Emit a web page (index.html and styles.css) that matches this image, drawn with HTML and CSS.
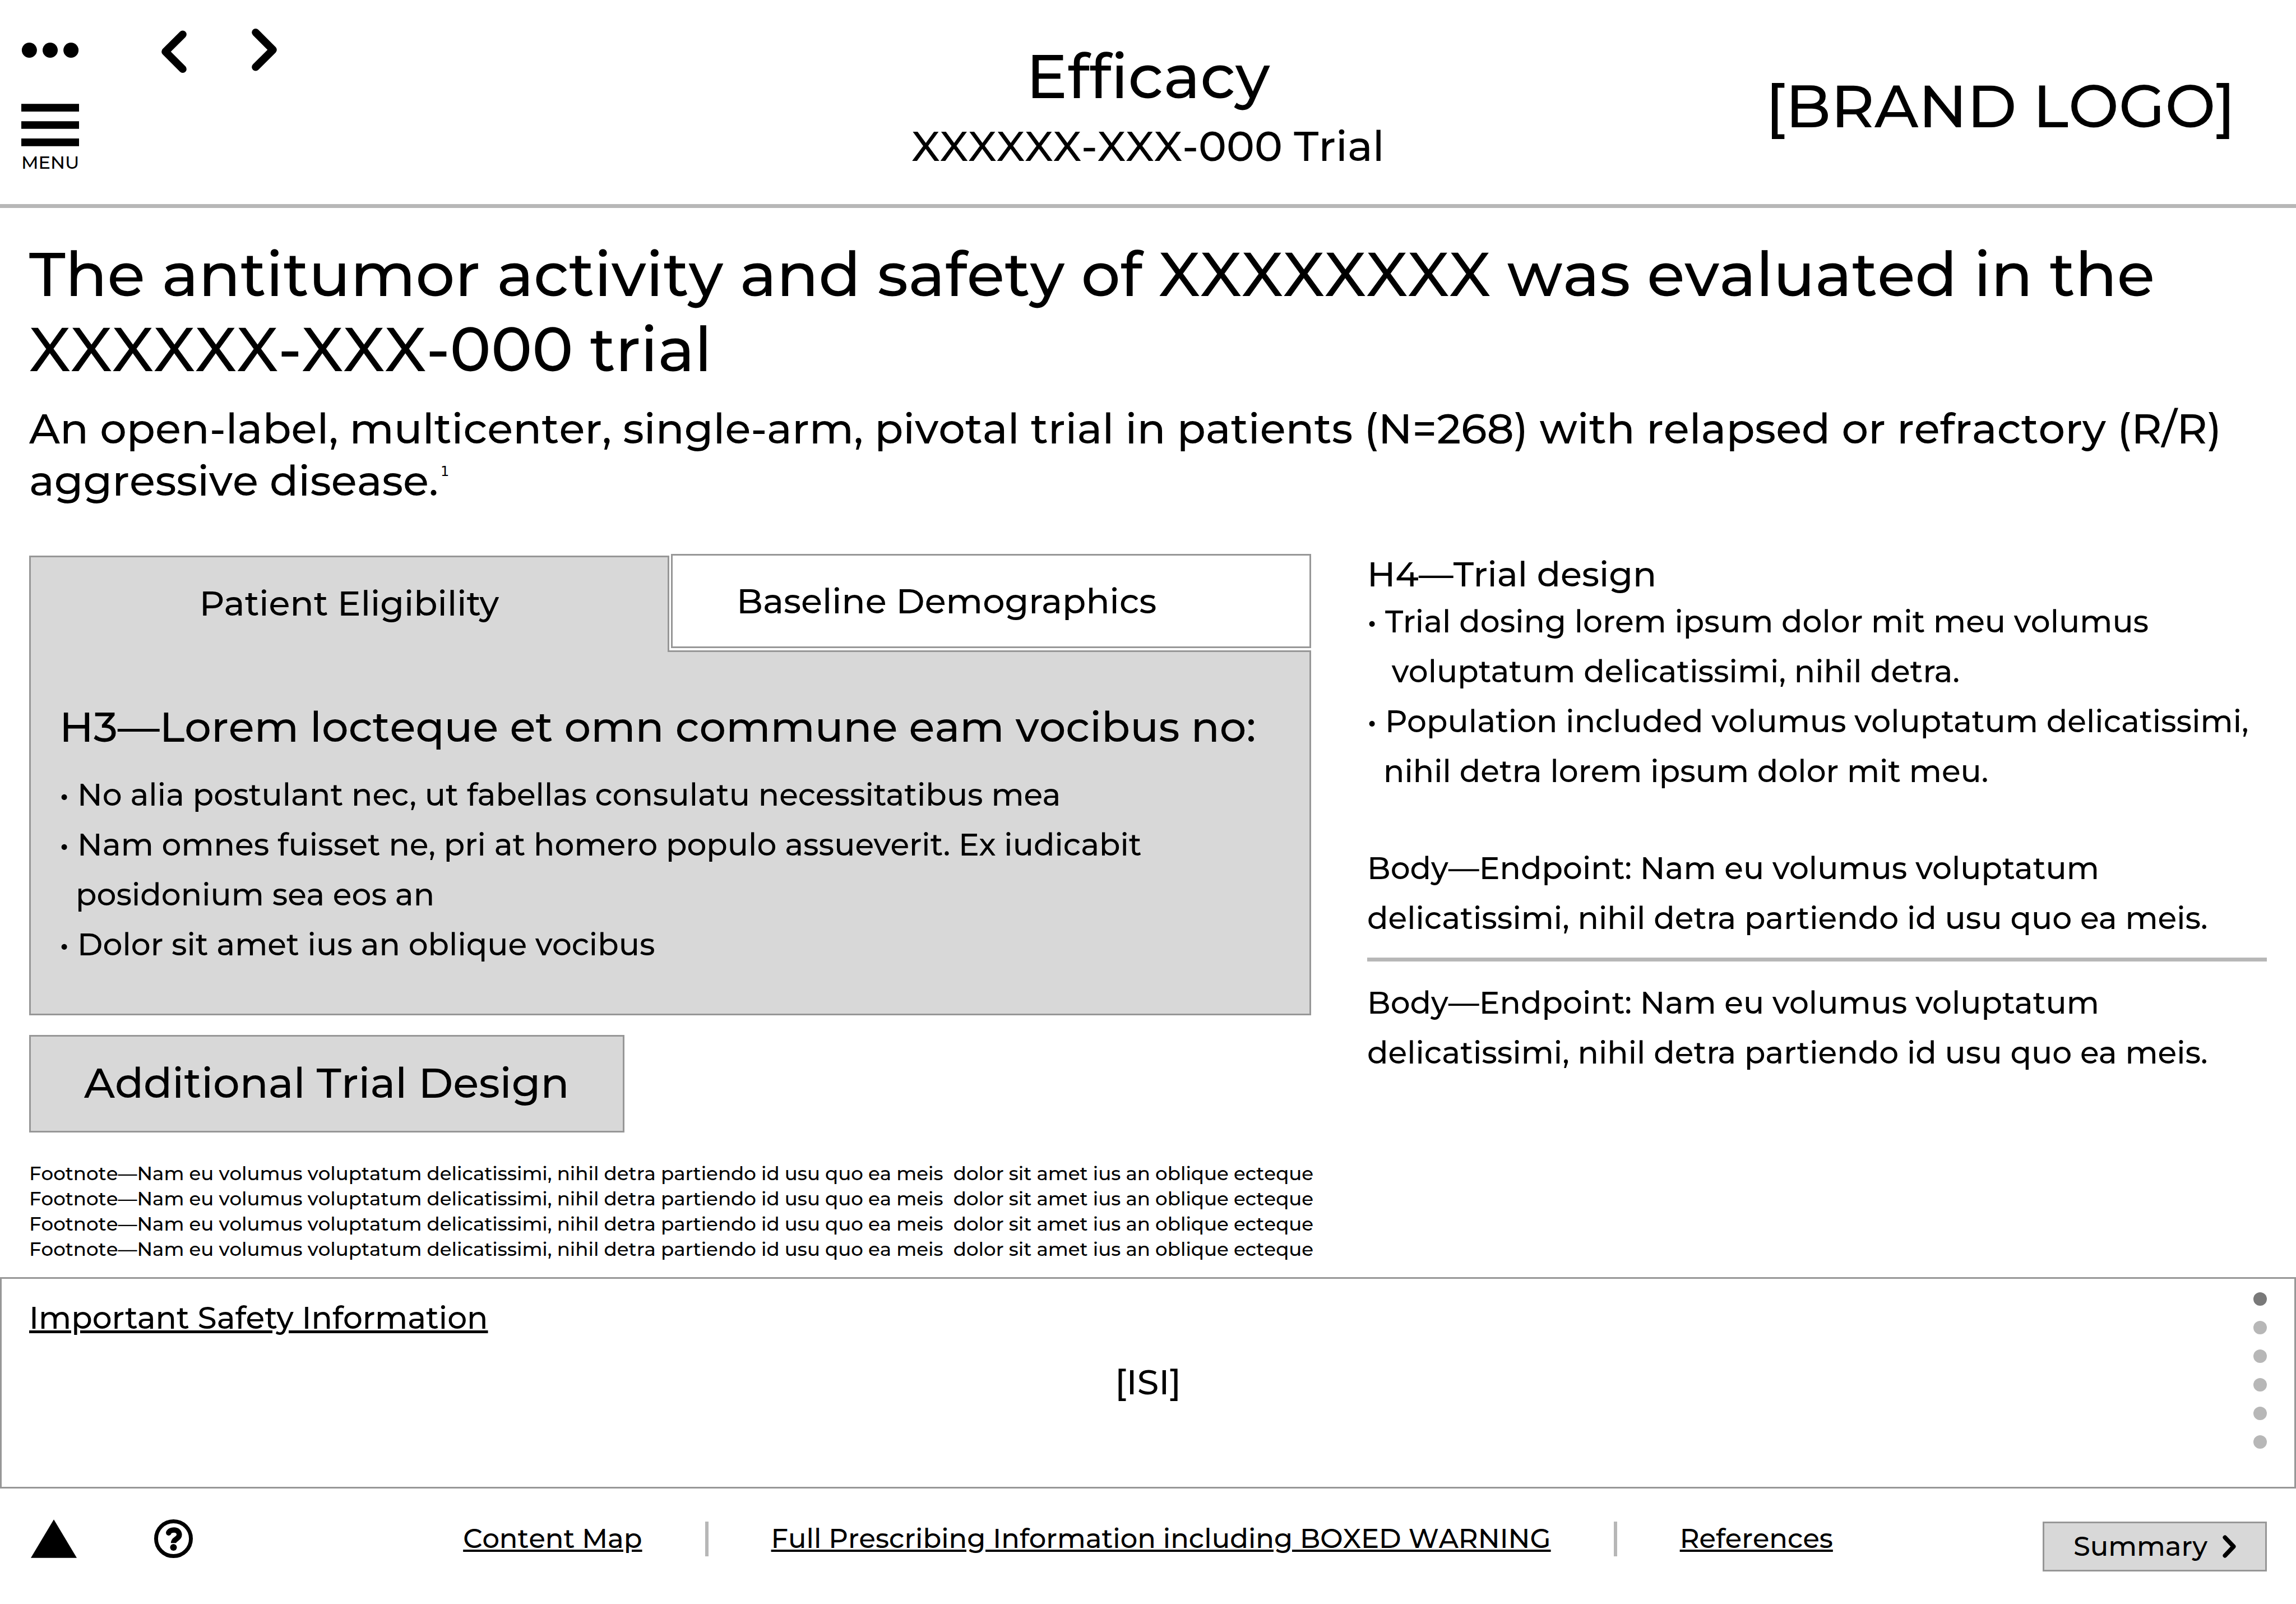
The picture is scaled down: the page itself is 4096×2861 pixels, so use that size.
FILE: index.html
```
<!DOCTYPE html>
<html lang="en">
<head>
<meta charset="utf-8">
<title>Efficacy</title>
<link rel="stylesheet" href="styles.css">
</head>
<body>
<div class="page">
  <header class="header">
    <div class="controls">
      <div class="menus">
        <button class="icon-button" type="button" aria-label="More">
          <svg class="dots-icon" viewBox="0 0 120 32"><circle cx="16" cy="16" r="16"/><circle cx="60" cy="16" r="16"/><circle cx="104" cy="16" r="16"/></svg>
        </button>
        <button class="icon-button menu-button" type="button">
          <svg class="bars-icon" viewBox="0 0 120 88"><path d="M0 0h120v16H0zM0 36h120v16H0zM0 72h120v16H0z"/></svg>
          <span>MENU</span>
        </button>
      </div>
      <div class="arrows">
        <button class="icon-button" type="button" aria-label="Previous">
          <svg class="arrow-icon" viewBox="0 0 52 92"><path d="M44 12L8 48L44 84"/></svg>
        </button>
        <button class="icon-button" type="button" aria-label="Next">
          <svg class="arrow-icon" viewBox="0 0 52 92"><path d="M8 8L44 44L8 80"/></svg>
        </button>
      </div>
    </div>
    <div class="titles">
      <p class="title">Efficacy</p>
      <p class="subtitle">XXXXXX-XXX-000 Trial</p>
    </div>
    <div class="logo">[BRAND LOGO]</div>
  </header>

  <main class="main">
    <h1 class="headline">The antitumor activity and safety of XXXXXXXX was evaluated in the XXXXXX-XXX-000 trial</h1>
    <p class="lead">An open-label, multicenter, single-arm, pivotal trial in patients (N=268) with relapsed or refractory (R/R) aggressive disease.<sup>1</sup></p>

    <div class="columns">
      <div class="study">
        <div class="tabs" role="tablist">
          <button class="tab tab-active" type="button" role="tab" aria-selected="true" aria-controls="eligibility">Patient Eligibility</button>
          <button class="tab tab-idle" type="button" role="tab" aria-selected="false">Baseline Demographics</button>
        </div>
        <section class="panel" id="eligibility" role="tabpanel">
          <h3 class="panel-title">H3—Lorem locteque et omn commune eam vocibus no:</h3>
          <ul class="bullets">
            <li>No alia postulant nec, ut fabellas consulatu necessitatibus mea</li>
            <li>Nam omnes fuisset ne, pri at homero populo assueverit. Ex iudicabit<br>posidonium sea eos an</li>
            <li>Dolor sit amet ius an oblique vocibus</li>
          </ul>
        </section>
        <button class="design-button" type="button">Additional Trial Design</button>
        <div class="footnotes">
          <p>Footnote—Nam eu volumus voluptatum delicatissimi, nihil detra partiendo id usu quo ea meis&nbsp; dolor sit amet ius an oblique ecteque</p>
          <p>Footnote—Nam eu volumus voluptatum delicatissimi, nihil detra partiendo id usu quo ea meis&nbsp; dolor sit amet ius an oblique ecteque</p>
          <p>Footnote—Nam eu volumus voluptatum delicatissimi, nihil detra partiendo id usu quo ea meis&nbsp; dolor sit amet ius an oblique ecteque</p>
          <p>Footnote—Nam eu volumus voluptatum delicatissimi, nihil detra partiendo id usu quo ea meis&nbsp; dolor sit amet ius an oblique ecteque</p>
        </div>
      </div>

      <aside class="design">
        <h4 class="design-title">H4—Trial design</h4>
        <ul class="bullets">
          <li>Trial dosing lorem ipsum dolor mit meu volumus<br>&nbsp;voluptatum delicatissimi, nihil detra.</li>
          <li>Population included volumus voluptatum delicatissimi,<br>nihil detra lorem ipsum dolor mit meu.</li>
        </ul>
        <p class="endpoint">Body—Endpoint: Nam eu volumus voluptatum<br>delicatissimi, nihil detra partiendo id usu quo ea meis.</p>
        <hr class="rule">
        <p>Body—Endpoint: Nam eu volumus voluptatum<br>delicatissimi, nihil detra partiendo id usu quo ea meis.</p>
      </aside>
    </div>
  </main>

  <section class="safety">
    <a class="safety-link" href="#safety">Important Safety Information</a>
    <p class="safety-text" id="safety">[ISI]</p>
    <div class="pager">
      <span class="dot dot-current"></span>
      <span class="dot"></span>
      <span class="dot"></span>
      <span class="dot"></span>
      <span class="dot"></span>
      <span class="dot"></span>
    </div>
  </section>

  <footer class="footer">
    <div class="footer-icons">
      <button class="icon-button" type="button" aria-label="Back to top">
        <svg class="triangle-icon" viewBox="0 0 96 80"><path d="M48 0L96 80H0z"/></svg>
      </button>
      <button class="icon-button" type="button" aria-label="Help">
        <svg class="help-icon" viewBox="0 0 80 80"><circle class="help-ring" cx="40" cy="40" r="36"/><path class="help-hook-end" d="M30 28h0"/><path class="help-hook" d="M30 28C31 24 36 22 41 22C48 22 52 26 52 32C52 41 40 40 40 49"/><circle cx="40" cy="58" r="7"/></svg>
      </button>
    </div>
    <nav class="links">
      <a href="#map">Content Map</a>
      <span class="divider"></span>
      <a href="#prescribing">Full Prescribing Information including BOXED WARNING</a>
      <span class="divider"></span>
      <a href="#references">References</a>
    </nav>
    <button class="summary" type="button">Summary
      <svg class="summary-icon" viewBox="0 0 28 48"><path d="M5 5L23 24L5 43"/></svg>
    </button>
  </footer>
</div>
</body>
</html>
```
FILE: styles.css
```
* {
  box-sizing: border-box;
}

body,
h1,
h3,
h4,
p,
ul {
  margin: 0;
  padding: 0;
  font-weight: 500;
}

body {
  background: #fff;
  color: #000;
  font-family: Montserrat, "DejaVu Sans", sans-serif;
  font-size: 55px;
  line-height: 89px;
  font-variant-ligatures: none;
}

button {
  margin: 0;
  padding: 0;
  color: inherit;
  font: inherit;
  font-variant-ligatures: none;
}

a {
  color: inherit;
}

svg {
  display: block;
}

.header,
.headline,
.lead,
.panel-title,
.design-button,
.footnotes,
.footer {
  font-kerning: none;
}

.page {
  display: flex;
  flex-direction: column;
  min-height: 100vh;
}

.icon-button {
  display: block;
  border: 0;
  background: none;
}

/* Header */

.header {
  display: grid;
  grid-template-columns: 1fr auto 1fr;
  align-items: start;
  min-height: 371px;
  border-bottom: 7px solid #b7b7b7;
}

.controls {
  display: flex;
  gap: 147px;
  padding-left: 38px;
}

.menus {
  width: 103px;
  padding-top: 76px;
}

.menu-button {
  margin-top: 82px;
  font-size: 32px;
  line-height: 38px;
}

.menu-button span {
  display: block;
  margin-top: 10px;
}

.dots-icon {
  width: 103px;
  height: 27px;
}

.bars-icon {
  width: 103px;
  height: 76px;
}

.arrows {
  display: flex;
  align-items: flex-start;
  gap: 116px;
  padding-top: 51px;
}

.arrow-icon {
  width: 45px;
  height: 79px;
}

.arrow-icon path {
  fill: none;
  stroke: #000;
  stroke-width: 16;
  stroke-linecap: round;
  stroke-linejoin: round;
}

.titles {
  padding-top: 69px;
  text-align: center;
}

.title {
  font-size: 110px;
  line-height: 134px;
}

.subtitle {
  margin-top: 11px;
  font-size: 75px;
  line-height: 93px;
}

.logo {
  padding: 126px 108px 0 0;
  font-size: 107px;
  line-height: 126px;
  text-align: right;
}

/* Main content */

.main {
  padding: 51px 52px 27px;
}

.headline {
  font-size: 110px;
  line-height: 134px;
}

.lead {
  margin-top: 28px;
  font-size: 75px;
  line-height: 93px;
}

.lead sup {
  margin-left: 4px;
  font-family: "DejaVu Sans", sans-serif;
  font-size: 24px;
  line-height: 24px;
  vertical-align: 35px;
}

.columns {
  display: grid;
  grid-template-columns: minmax(0, 2287fr) minmax(0, 1605fr);
  gap: 100px;
  margin-top: 84px;
}

.tabs {
  display: grid;
  grid-template-columns: 1fr 1fr;
  gap: 3px;
}

.tab {
  border: 3px solid #979797;
  font-size: 62px;
  line-height: 76px;
}

.tab-active {
  position: relative;
  height: 172px;
  margin: 3px 0 -3px;
  padding-bottom: 6px;
  border-bottom: 0;
  background: #d8d8d8;
}

.tab-idle {
  height: 168px;
  padding-left: 114px;
  background: #fff;
  text-align: left;
}

.panel {
  padding: 87px 51px 79px;
  border: 3px solid #979797;
  background: #d8d8d8;
}

.panel-title {
  margin-bottom: 30px;
  font-size: 75px;
  line-height: 93px;
}

.bullets {
  list-style: none;
}

.bullets li {
  padding-left: 29px;
  text-indent: -29px;
}

.bullets li::before {
  content: "• ";
}

.design-button {
  display: block;
  height: 174px;
  margin-top: 35px;
  padding: 0 95px 4px;
  border: 3px solid #979797;
  background: #d8d8d8;
  font-size: 75px;
  line-height: 93px;
}

.footnotes {
  margin-top: 51px;
  font-size: 34px;
  line-height: 45px;
  white-space: nowrap;
}

.design-title {
  margin-bottom: 4px;
  font-size: 62px;
  line-height: 72px;
}

.endpoint {
  margin-top: 84px;
}

.rule {
  height: 7px;
  margin: 26px 0 29px;
  border: 0;
  background: #b7b7b7;
}

/* Safety information */

.safety {
  display: grid;
  grid-template-columns: 1fr auto 1fr;
  align-items: start;
  min-height: 377px;
  padding: 24px 49px 28px;
  border: 3px solid #979797;
}

.safety-link {
  justify-self: start;
  margin-top: 12px;
  line-height: 67px;
}

.safety-text {
  align-self: center;
  font-size: 62px;
  line-height: 76px;
}

.pager {
  display: flex;
  flex-direction: column;
  justify-self: end;
  gap: 27px;
}

.dot {
  width: 24px;
  height: 24px;
  border-radius: 50%;
  background: #b7b7b7;
}

.dot-current {
  background: #797979;
}

/* Footer */

.footer {
  display: grid;
  grid-template-columns: 1fr auto 1fr;
  align-items: start;
  padding: 55px 52px;
  font-size: 48px;
  line-height: 59px;
}

.footer-icons {
  display: flex;
  gap: 138px;
  padding-left: 3px;
}

.triangle-icon {
  width: 82px;
  height: 69px;
}

.help-icon {
  width: 69px;
  height: 69px;
}

.help-ring,
.help-hook,
.help-hook-end {
  fill: none;
  stroke: #000;
  stroke-width: 8;
}

.help-hook,
.help-hook-end {
  stroke-width: 11;
}

.help-hook-end {
  stroke-linecap: round;
}

.links {
  display: flex;
  align-items: center;
  gap: 112px;
  height: 69px;
}

.divider {
  width: 6px;
  height: 62px;
  background: #b7b7b7;
}

.summary {
  display: flex;
  align-items: center;
  justify-self: end;
  gap: 27px;
  height: 89px;
  margin-top: 4px;
  padding: 0 52px;
  border: 3px solid #979797;
  background: #d8d8d8;
}

.summary-icon {
  width: 24px;
  height: 41px;
}

.summary-icon path {
  fill: none;
  stroke: #000;
  stroke-width: 9;
  stroke-linecap: round;
  stroke-linejoin: round;
}
```
